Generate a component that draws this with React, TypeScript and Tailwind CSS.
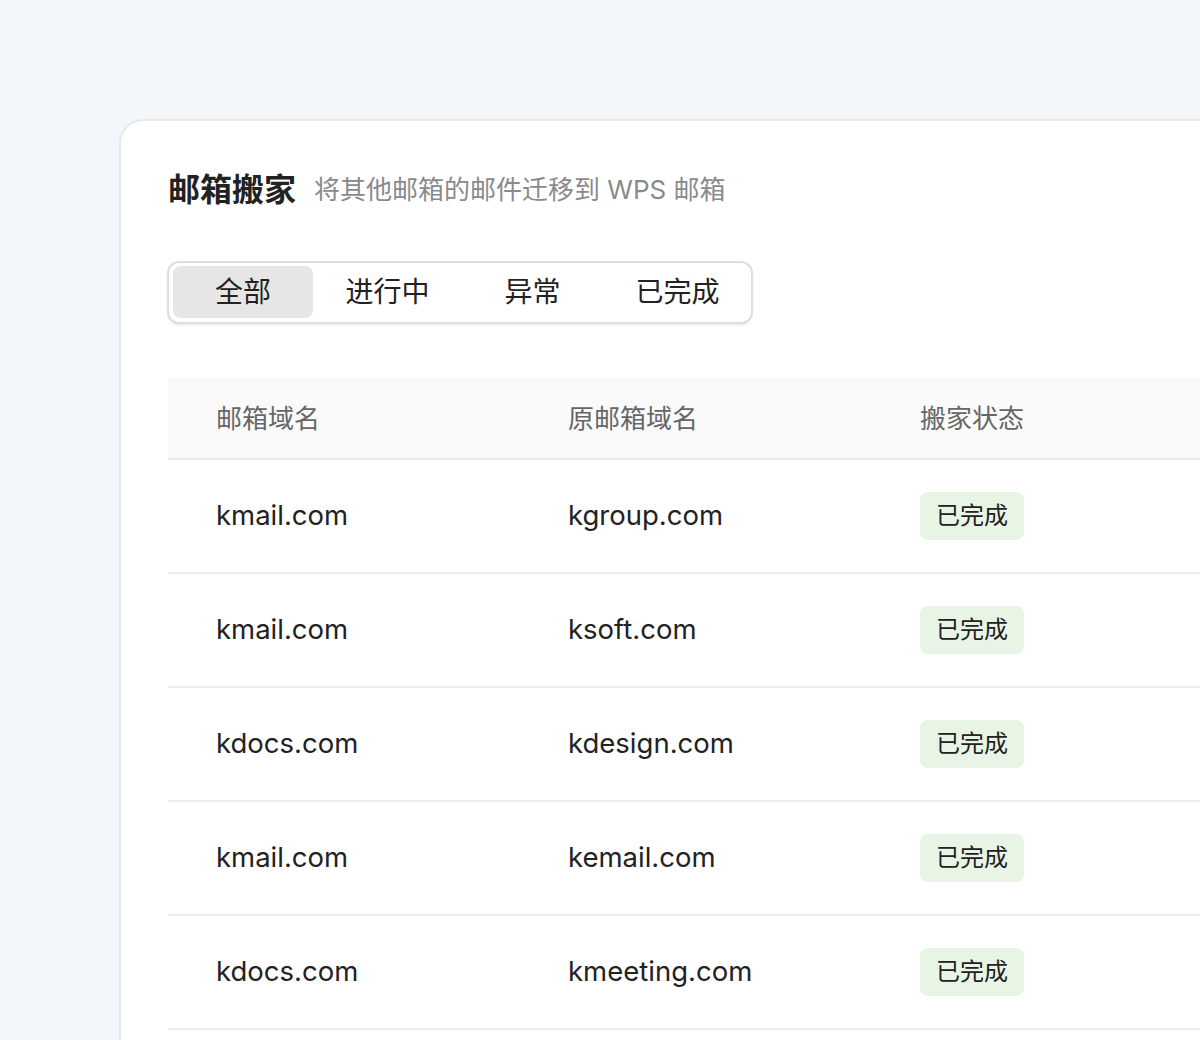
const rows = [
  { domain: "kmail.com", origin: "kgroup.com" },
  { domain: "kmail.com", origin: "ksoft.com" },
  { domain: "kdocs.com", origin: "kdesign.com" },
  { domain: "kmail.com", origin: "kemail.com" },
  { domain: "kdocs.com", origin: "kmeeting.com" },
];

const tabs = ["全部", "进行中", "异常", "已完成"];

export default function App() {
  return (
    <div
      className="h-[1040px] w-[1200px] overflow-hidden bg-[#f4f7fa] pl-[119px] pt-[119px]"
      style={{ fontFamily: "Inter, 'Noto Sans CJK SC', sans-serif" }}
    >
      <div className="h-[1000px] w-[1200px] rounded-tl-[24px] border-2 border-[#e6e9ec] bg-white pl-[47px] pt-[47px]">
        {/* header */}
        <div className="flex items-center gap-[18px] leading-[44px]">
          <h1 className="text-[32px] font-bold text-[#222]">邮箱搬家</h1>
          <span className="text-[26px] text-[#8a8a8a]">将其他邮箱的邮件迁移到 WPS 邮箱</span>
        </div>

        {/* segmented tabs */}
        <div className="-ml-px mt-[49px] flex w-fit rounded-[12px] border-2 border-[#dedede] bg-white pb-[4px] pl-1 pr-px pt-[3px] shadow-[0_2px_2px_rgba(0,0,0,0.06)]">
          {tabs.map((t, i) => (
            <div
              key={t}
              className={`flex h-[52px] items-center justify-center rounded-[8px] text-[28px] text-[#222] ${
                i === 0 ? "w-[140px] bg-[#e6e6e6]" : i === 1 ? "ml-[2px] w-[145px]" : "w-[145px]"
              }`}
            >
              {t}
            </div>
          ))}
        </div>

        {/* table */}
        <div className="mt-[54px]">
          <div className="flex h-[82px] items-center border-b-2 border-[#e8e8e8] bg-[#fafafa] pl-12 text-[26px] text-[#666]">
            <div className="w-[352px]">邮箱域名</div>
            <div className="w-[352px]">原邮箱域名</div>
            <div>搬家状态</div>
          </div>
          {rows.map((r, i) => (
            <div key={i} className="flex h-[114px] items-center border-b-2 border-[#ebebeb] pl-12 text-[27.5px] text-[#222]">
              <div className="w-[352px]">{r.domain}</div>
              <div className="w-[352px]">{r.origin}</div>
              <div className="flex h-12 w-[104px] items-center justify-center rounded-[8px] bg-[#e9f5e4] text-[24px] text-[#222]">
                已完成
              </div>
            </div>
          ))}
        </div>
      </div>
    </div>
  );
}
